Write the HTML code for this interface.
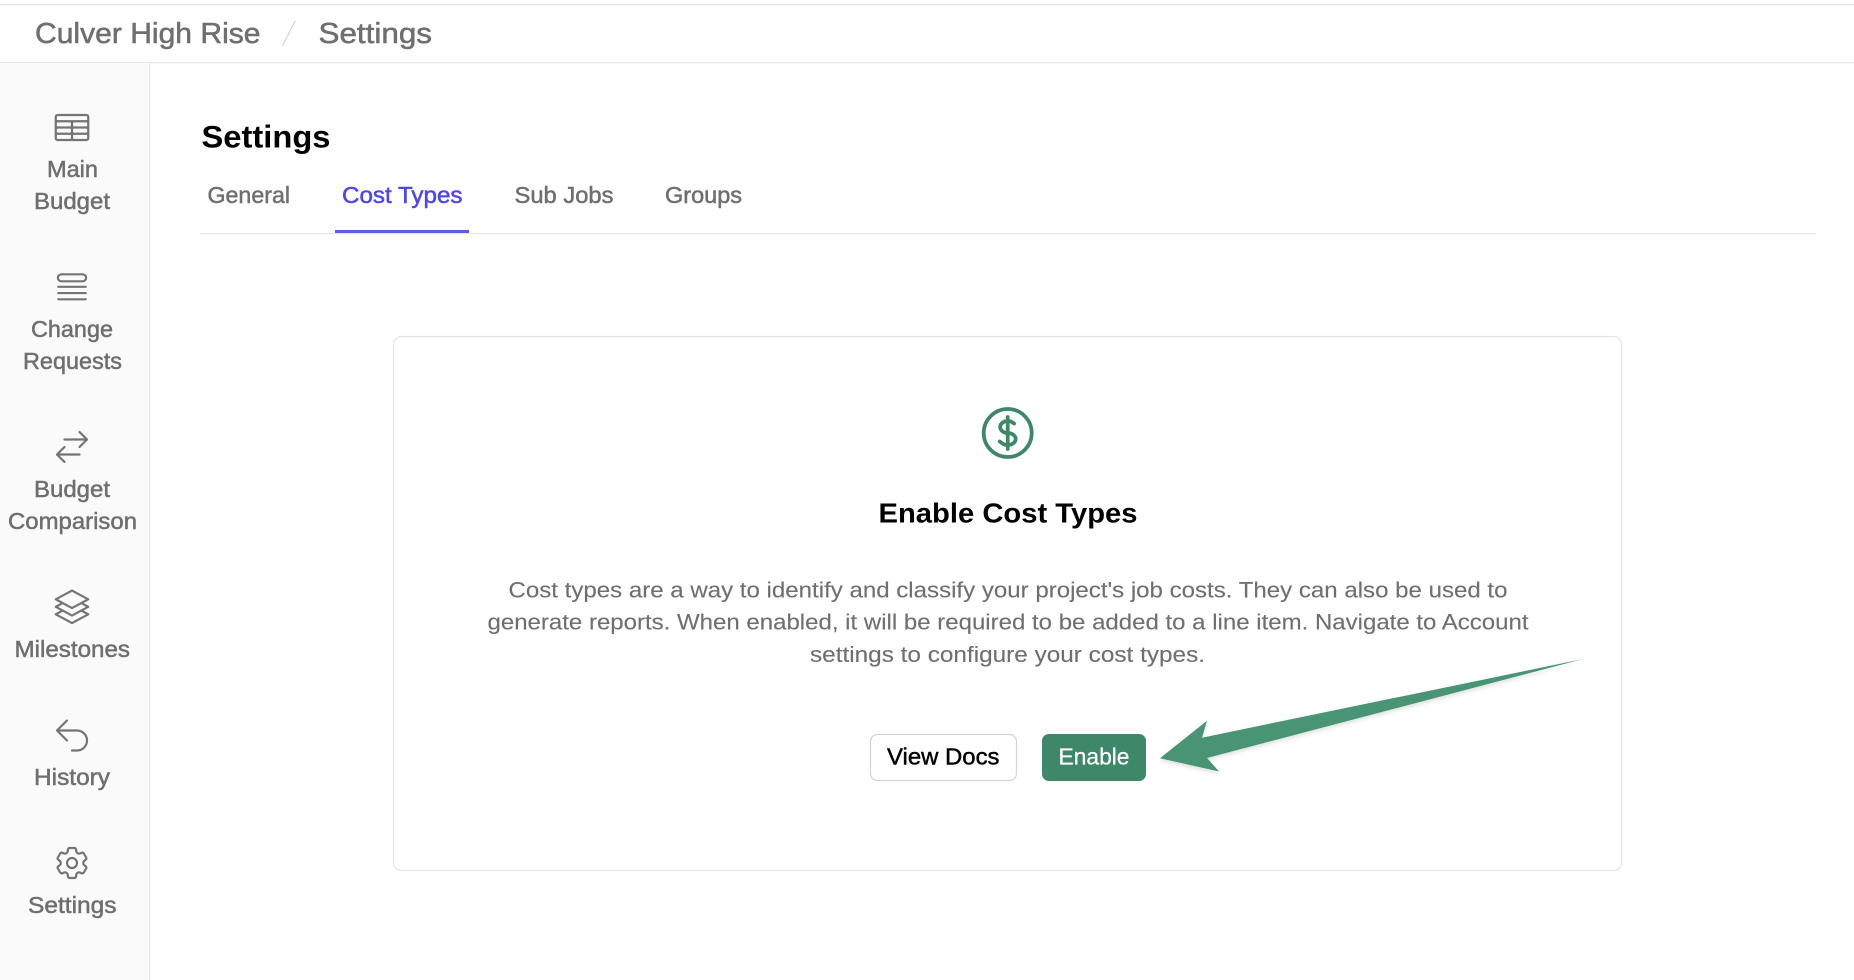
<!DOCTYPE html>
<html><head><meta charset="utf-8"><title>Settings</title>
<style>
html,body{margin:0;padding:0;width:1854px;height:980px;overflow:hidden;background:#fff}
svg{display:block}
text{font-family:"Liberation Sans",sans-serif}
.m{fill:#6f6f6f;stroke:#6f6f6f;stroke-width:.5;font-size:23px}
.i{fill:none;stroke:#747474;stroke-width:2.2px;stroke-linecap:round;stroke-linejoin:round;vector-effect:non-scaling-stroke}
.p{fill:#6f6f6f;stroke:#6f6f6f;stroke-width:.12;font-size:22.5px}
</style></head><body>
<svg width="1854" height="980" viewBox="0 0 1854 980" xmlns="http://www.w3.org/2000/svg">
<defs><filter id="sh" x="-5%" y="-20%" width="110%" height="150%"><feDropShadow dx="0" dy="2" stdDeviation="2.5" flood-color="#000" flood-opacity=".14"/></filter></defs>
<rect width="1854" height="980" fill="#fff"/>
<rect x="0" y="4" width="1854" height="1.3" fill="#e5e5e5"/>
<rect x="0" y="62" width="1854" height="1.3" fill="#e5e5e5"/>
<rect x="0" y="63" width="149" height="917" fill="#fafafa"/>
<rect x="149" y="63" width="1.2" height="917" fill="#e8e8e8"/>

<text x="35" y="43" textLength="225.500" lengthAdjust="spacingAndGlyphs" style="font-size:29px;fill:#6f6f6f;stroke:#6f6f6f;stroke-width:.55">Culver High Rise</text>
<path d="M295 21 282.500 46" stroke="#d4d4d4" stroke-width="1.200" fill="none"/>
<text x="318.500" y="43" textLength="113.500" lengthAdjust="spacingAndGlyphs" style="font-size:29px;fill:#6f6f6f;stroke:#6f6f6f;stroke-width:.55">Settings</text>

<g transform="translate(52,107.500) scale(1.667)"><path class="i" d="M3.375 19.500h17.250m-17.250 0a1.125 1.125 0 0 1-1.125-1.125M3.375 19.500h7.500c.621 0 1.125-.504 1.125-1.125m-9.750 0V5.625m0 12.750v-1.500c0-.621.504-1.125 1.125-1.125m18.375 2.625V5.625m0 12.750c0 .621-.504 1.125-1.125 1.125m1.125-1.125v-1.500c0-.621-.504-1.125-1.125-1.125m0 3.750h-7.500A1.125 1.125 0 0 1 12 18.375m9.750-12.750c0-.621-.504-1.125-1.125-1.125H3.375c-.621 0-1.125.504-1.125 1.125m19.500 0v1.500c0 .621-.504 1.125-1.125 1.125M2.250 5.625v1.500c0 .621.504 1.125 1.125 1.125m0 0h17.250m-17.250 0h7.500c.621 0 1.125.504 1.125 1.125M3.375 8.250c-.621 0-1.125.504-1.125 1.125v1.500c0 .621.504 1.125 1.125 1.125m17.250-3.750h-7.500c-.621 0-1.125.504-1.125 1.125m8.625-1.125c.621 0 1.125.504 1.125 1.125v1.500c0 .621-.504 1.125-1.125 1.125m-17.250 0h7.500m-7.500 0c-.621 0-1.125.504-1.125 1.125v1.500c0 .621.504 1.125 1.125 1.125M12 10.875v-1.500m0 1.500c0 .621-.504 1.125-1.125 1.125M12 10.875c0 .621.504 1.125 1.125 1.125m-2.250 0c.621 0 1.125.504 1.125 1.125M13.125 12h7.500m-7.500 0c-.621 0-1.125.504-1.125 1.125M20.625 12c.621 0 1.125.504 1.125 1.125v1.500c0 .621-.504 1.125-1.125 1.125m-17.250 0h7.500M12 14.625v-1.500m0 1.500c0 .621-.504 1.125-1.125 1.125M12 14.625c0 .621.504 1.125 1.125 1.125m-2.250 0c.621 0 1.125.504 1.125 1.125m0 1.500v-1.500m0 0c0-.621.504-1.125 1.125-1.125m0 0h7.500"/></g>
<text class="m" x="47" y="177" textLength="51" lengthAdjust="spacingAndGlyphs">Main</text>
<text class="m" x="34" y="209" textLength="76" lengthAdjust="spacingAndGlyphs">Budget</text>

<g transform="translate(52,266.800) scale(1.667)"><path class="i" d="M3.750 12h16.500m-16.500 3.750h16.500m-16.500 3.750h16.500M5.625 4.500h12.750a2.100 2.100 0 0 1 0 4.200H5.625a2.100 2.100 0 0 1 0-4.200Z"/></g>
<text class="m" x="31" y="337" textLength="82" lengthAdjust="spacingAndGlyphs">Change</text>
<text class="m" x="23" y="369" textLength="99" lengthAdjust="spacingAndGlyphs">Requests</text>

<g transform="translate(52,427) scale(1.667)"><path class="i" d="M7.500 21 3 16.500m0 0L7.500 12M3 16.500h13.500m0-13.500L21 7.500m0 0L16.500 12M21 7.500H7.500"/></g>
<text class="m" x="34" y="497" textLength="76" lengthAdjust="spacingAndGlyphs">Budget</text>
<text class="m" x="8" y="529" textLength="129" lengthAdjust="spacingAndGlyphs">Comparison</text>

<g transform="translate(52,586.800) scale(1.667)"><path class="i" d="M6.429 9.750 2.250 12l4.179 2.250m0-4.500 5.571 3 5.571-3m-11.142 0L2.250 7.500 12 2.250l9.750 5.250-4.179 2.250m0 0L21.750 12l-4.179 2.250m0 0 4.179 2.250L12 21.750 2.250 16.500l4.179-2.250m11.142 0-5.571 3-5.571-3"/></g>
<text class="m" x="14.500" y="657" textLength="115.500" lengthAdjust="spacingAndGlyphs">Milestones</text>

<g transform="translate(52,715.500) scale(1.667)"><path class="i" d="M9 15 3 9m0 0 6-6M3 9h12a6 6 0 0 1 0 12h-3"/></g>
<text class="m" x="34" y="785" textLength="76" lengthAdjust="spacingAndGlyphs">History</text>

<g transform="translate(52,843) scale(1.667)"><path class="i" d="M9.594 3.940c.09-.542.56-.94 1.110-.94h2.593c.55 0 1.020.398 1.110.94l.213 1.281c.063.374.313.686.645.870.074.04.147.083.220.127.325.196.72.257 1.075.124l1.217-.456a1.125 1.125 0 0 1 1.370.490l1.296 2.247a1.125 1.125 0 0 1-.26 1.431l-1.003.827c-.293.241-.438.613-.43.992a7.723 7.723 0 0 1 0 .255c-.008.378.137.75.43.991l1.004.827c.424.35.534.955.26 1.430l-1.298 2.247a1.125 1.125 0 0 1-1.369.491l-1.217-.456c-.355-.133-.75-.072-1.076.124a6.470 6.470 0 0 1-.22.128c-.331.183-.581.495-.644.869l-.213 1.281c-.09.543-.56.94-1.110.94h-2.594c-.55 0-1.019-.398-1.110-.94l-.213-1.281c-.062-.374-.312-.686-.644-.87a6.520 6.520 0 0 1-.22-.127c-.325-.196-.72-.257-1.076-.124l-1.217.456a1.125 1.125 0 0 1-1.369-.49l-1.297-2.247a1.125 1.125 0 0 1 .26-1.431l1.004-.827c.292-.24.437-.613.43-.991a6.932 6.932 0 0 1 0-.255c.007-.38-.138-.751-.43-.992l-1.004-.827a1.125 1.125 0 0 1-.26-1.430l1.297-2.247a1.125 1.125 0 0 1 1.370-.491l1.216.456c.356.133.751.072 1.076-.124.072-.044.146-.086.22-.128.332-.183.582-.495.644-.869l.214-1.280Z"/><path class="i" d="M15 12a3 3 0 1 1-6 0 3 3 0 0 1 6 0Z"/></g>
<text class="m" x="28" y="913" textLength="88.500" lengthAdjust="spacingAndGlyphs">Settings</text>

<text x="201.500" y="147.500" textLength="129" lengthAdjust="spacingAndGlyphs" style="font-size:31.500px;font-weight:700;fill:#000">Settings</text>
<text class="m" x="207.500" y="203" textLength="82.500" lengthAdjust="spacingAndGlyphs">General</text>
<text x="342" y="203" textLength="120.500" lengthAdjust="spacingAndGlyphs" style="font-size:23px;fill:#4f46e5;stroke:#4f46e5;stroke-width:.5">Cost Types</text>
<text class="m" x="514.500" y="203" textLength="99" lengthAdjust="spacingAndGlyphs">Sub Jobs</text>
<text class="m" x="665" y="203" textLength="77" lengthAdjust="spacingAndGlyphs">Groups</text>
<rect x="200.500" y="233" width="1615.500" height="1.200" fill="#e5e5e5"/>
<rect x="335" y="230" width="134" height="3" fill="#5b5be8"/>

<rect x="393.500" y="336.500" width="1228" height="534" rx="8" fill="#fff" stroke="#e5e5e5" stroke-width="1.200"/>

<g transform="translate(975.700,401) scale(2.667)"><path d="M12 6v12m-3-2.818.879.659c1.171.879 3.070.879 4.242 0 1.172-.879 1.172-2.303 0-3.182C13.536 12.219 12.768 12 12 12c-.725 0-1.450-.22-2.003-.659-1.106-.879-1.106-2.303 0-3.182s2.900-.879 4.006 0l.415.33M21 12a9 9 0 1 1-18 0 9 9 0 0 1 18 0Z" fill="none" stroke="#3f8769" stroke-width="1.400" stroke-linecap="round" stroke-linejoin="round"/></g>
<text x="878.500" y="522.500" textLength="259" lengthAdjust="spacingAndGlyphs" style="font-size:28px;font-weight:700;fill:#000">Enable Cost Types</text>

<text class="p" x="508.500" y="597.500" textLength="999" lengthAdjust="spacingAndGlyphs">Cost types are a way to identify and classify your project's job costs. They can also be used to</text>
<text class="p" x="487.500" y="629.500" textLength="1041" lengthAdjust="spacingAndGlyphs">generate reports. When enabled, it will be required to be added to a line item. Navigate to Account</text>
<text class="p" x="810" y="662" textLength="395" lengthAdjust="spacingAndGlyphs">settings to configure your cost types.</text>

<rect x="870.500" y="734.500" width="146" height="46" rx="7" fill="#fff" stroke="#d4d4d4" stroke-width="1.200"/>
<text x="887" y="764.500" textLength="112.500" lengthAdjust="spacingAndGlyphs" style="font-size:23px;fill:#000;stroke:#000;stroke-width:.45">View Docs</text>
<rect x="1042" y="734" width="104" height="47" rx="7" fill="#3f8769"/>
<text x="1058.500" y="764.500" textLength="71" lengthAdjust="spacingAndGlyphs" style="font-size:23px;fill:#fff;stroke:#fff;stroke-width:.25">Enable</text>

<path d="M1160 758.300 1207 720.700 1202 737.700 1583 659 1207 758 1219 771.500Z" fill="#4a9475" filter="url(#sh)"/>
</svg>
</body></html>
